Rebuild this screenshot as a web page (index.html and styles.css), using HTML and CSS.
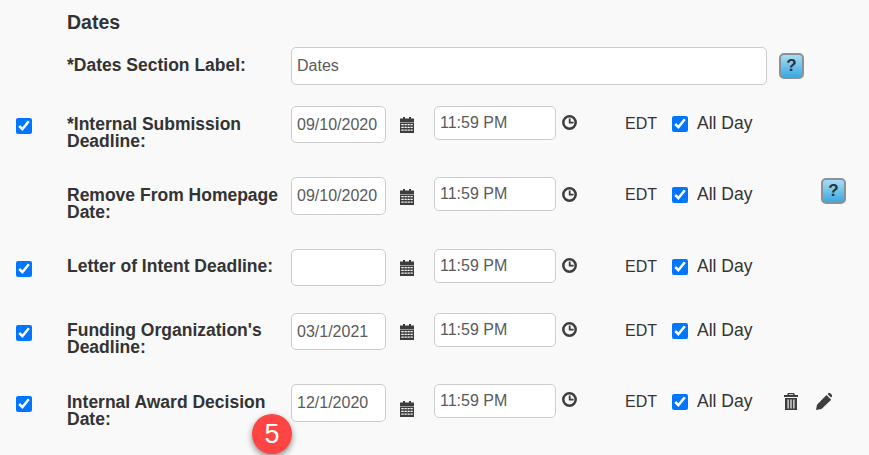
FILE: index.html
```html
<!DOCTYPE html>
<html lang="en">
<head>
    <meta charset="UTF-8">
    <title>Dates</title>
    <link rel="stylesheet" href="styles.css">
</head>
<body>
    <svg class="sprite" aria-hidden="true">
        <symbol id="i-calendar" viewBox="0 0 14 16">
            <path d="M3 0h2v2H3zM9 0h2v2H9z"/>
            <path d="M0 1.500h14v3.500H0z"/>
            <path fill-rule="evenodd" d="M0 5.500h14V16H0zM1.300 7v1.200h2.400V7zM4.500 7v1.200h2.200V7zM7.500 7v1.200h2.200V7zM10.500 7v1.200h2.200V7zM1.300 9.800V11h2.400V9.800zM4.500 9.800V11h2.200V9.800zM7.500 9.800V11h2.200V9.800zM10.500 9.800V11h2.200V9.800zM1.300 12.600v1.200h2.400v-1.200zM4.500 12.600v1.200h2.200v-1.200zM7.500 12.600v1.200h2.200v-1.200zM10.500 12.600v1.200h2.200v-1.200z"/>
        </symbol>
        <symbol id="i-clock" viewBox="0 0 15 15">
            <circle cx="7.500" cy="7.500" r="6.200" fill="none" stroke="currentColor" stroke-width="2.500"/>
            <path d="M6.800 3.500h1.800v3.200h3v1.800H6.800z"/>
        </symbol>
        <symbol id="i-trash" viewBox="0 0 14 17">
            <path d="M4 0h6l1 2h3v2H0V2h3zM5 1.200 4.600 2h4.800L9 1.200z"/>
            <path fill-rule="evenodd" d="M1 5h12v12H1zM3.500 6.500v9h1.200v-9zM6.400 6.500v9h1.200v-9zM9.300 6.500v9h1.200v-9z"/>
        </symbol>
        <symbol id="i-pencil" viewBox="0 0 16 17">
            <path d="M0 17l1-5.200L10.500 2l4.700 4.700L5.500 16z"/>
            <path d="M11.500 1l1-1c.5-.4 1-.4 1.500 0l2 2c.4.500.4 1 0 1.500l-1 1z"/>
        </symbol>
    </svg>

    <div class="dates-form">
        <h4 class="section-title">Dates</h4>

        <div class="section-label-row">
            <label class="field-label">*Dates Section Label:</label>
            <input class="form-input label-input" type="text" value="Dates">
            <span class="help-btn">?</span>
        </div>

        <div class="date-rows">
            <div class="date-row">
                <input class="row-check" type="checkbox" checked>
                <label class="field-label">*Internal Submission Deadline:</label>
                <input class="form-input date-input" type="text" value="09/10/2020">
                <svg class="icon cal-icon"><use href="#i-calendar"/></svg>
                <input class="form-input time-input" type="text" value="11:59 PM">
                <svg class="icon clock-icon"><use href="#i-clock"/></svg>
                <span class="tz">EDT</span>
                <input class="allday-check" type="checkbox" checked>
                <span class="allday-text">All Day</span>
            </div>

            <div class="date-row tall">
                <span class="row-check"></span>
                <label class="field-label">Remove From Homepage Date:</label>
                <input class="form-input date-input" type="text" value="09/10/2020">
                <svg class="icon cal-icon low"><use href="#i-calendar"/></svg>
                <input class="form-input time-input" type="text" value="11:59 PM">
                <svg class="icon clock-icon low"><use href="#i-clock"/></svg>
                <span class="tz">EDT</span>
                <input class="allday-check" type="checkbox" checked>
                <span class="allday-text">All Day</span>
                <span class="help-btn row-help">?</span>
            </div>

            <div class="date-row short snug">
                <input class="row-check" type="checkbox" checked>
                <label class="field-label">Letter of Intent Deadline:</label>
                <input class="form-input date-input" type="text" value="">
                <svg class="icon cal-icon"><use href="#i-calendar"/></svg>
                <input class="form-input time-input" type="text" value="11:59 PM">
                <svg class="icon clock-icon"><use href="#i-clock"/></svg>
                <span class="tz">EDT</span>
                <input class="allday-check" type="checkbox" checked>
                <span class="allday-text">All Day</span>
            </div>

            <div class="date-row snug">
                <input class="row-check" type="checkbox" checked>
                <label class="field-label">Funding Organization's Deadline:</label>
                <input class="form-input date-input" type="text" value="03/1/2021">
                <svg class="icon cal-icon"><use href="#i-calendar"/></svg>
                <input class="form-input time-input" type="text" value="11:59 PM">
                <svg class="icon clock-icon"><use href="#i-clock"/></svg>
                <span class="tz">EDT</span>
                <input class="allday-check" type="checkbox" checked>
                <span class="allday-text">All Day</span>
            </div>

            <div class="date-row tall">
                <input class="row-check" type="checkbox" checked>
                <label class="field-label">Internal Award Decision Date:</label>
                <input class="form-input date-input" type="text" value="12/1/2020">
                <svg class="icon cal-icon lowest"><use href="#i-calendar"/></svg>
                <input class="form-input time-input" type="text" value="11:59 PM">
                <svg class="icon clock-icon high"><use href="#i-clock"/></svg>
                <span class="tz">EDT</span>
                <input class="allday-check" type="checkbox" checked>
                <span class="allday-text">All Day</span>
                <svg class="icon trash-icon"><use href="#i-trash"/></svg>
                <svg class="icon pencil-icon"><use href="#i-pencil"/></svg>
            </div>
        </div>

        <span class="step-badge">5</span>
    </div>
</body>
</html>
```

FILE: styles.css
```css
:root { --text: #333; --icon: #3d3d3d; --border: #ccc; }
html, body { height: 100%; }
body { margin: 0; background-color: #f9f9f9; color: var(--text); font-family: "Liberation Sans", Arial, sans-serif; font-size: 16px; overflow: hidden; }
.sprite { display: none; }
.dates-form { position: relative; height: 455px; padding-top: 11px; box-sizing: border-box; }
.section-title { margin: 0 0 14px 67px; font-size: 19.5px; line-height: 22px; font-weight: bold; }
.field-label { display: block; width: 224px; box-sizing: border-box; padding-right: 10px; margin-top: 10px; font-weight: bold; font-size: 17.5px; line-height: 17px; }
.snug .field-label { margin-top: 9px; }

.section-label-row { display: flex; align-items: flex-start; height: 59px; padding-left: 67px; }
.form-input { box-sizing: border-box; margin: 0; padding: 0 5px; border: 1px solid var(--border); border-radius: 5px; background-color: #fff; color: #5a5a5a; font-family: inherit; font-size: 16px; outline: none; }
.label-input { width: 476px; height: 38px; }
.help-btn { display: flex; align-items: center; justify-content: center; box-sizing: border-box; width: 25px; height: 26px; margin: 6px 0 0 12px; border: 2px solid #8a9299; border-radius: 5px; background: linear-gradient(#a9dcf5, #3aa9de); color: #2c3238; font-weight: bold; font-size: 17px; }

.date-row { display: flex; align-items: flex-start; height: 71px; }
.date-row.tall { height: 72px; }
.date-row.short { height: 64px; }
.row-check { flex: none; box-sizing: border-box; width: 16px; height: 16px; margin: 12px 35px 0 16px; }
.date-input { flex: none; width: 95px; height: 37px; }
.tall .date-input { height: 38px; }
.time-input { flex: none; width: 122px; height: 34px; }
.icon { flex: none; display: block; fill: var(--icon); color: var(--icon); }
.cal-icon { width: 14px; height: 16px; margin: 11px 20px 0 14px; }
.cal-icon.low { margin-top: 12px; }
.cal-icon.lowest { margin-top: 17px; }
.clock-icon { width: 15px; height: 15px; margin: 9px 48px 0 6px; }
.clock-icon.low { margin-top: 10px; }
.clock-icon.high { margin-top: 8px; }
.tz { width: 47px; margin-top: 9px; line-height: 18px; }
.allday-check { flex: none; width: 16px; height: 16px; margin: 10px 9px 0 0; }
.allday-text { width: 87px; margin-top: 7px; font-size: 17.5px; line-height: 20px; }
.row-help { margin: 1px 0 0 37px; }
.trash-icon { width: 14px; height: 17px; margin: 9px 18px 0 0; }
.pencil-icon { width: 16px; height: 17px; margin-top: 9px; }

.step-badge { position: absolute; left: 252px; top: 414px; display: flex; align-items: center; justify-content: center; width: 40px; height: 40px; border-radius: 50%; background-color: #ff4444; color: #fff; font-size: 27px; box-shadow: 0 3px 6px rgba(0, 0, 0, 0.45); }
```
